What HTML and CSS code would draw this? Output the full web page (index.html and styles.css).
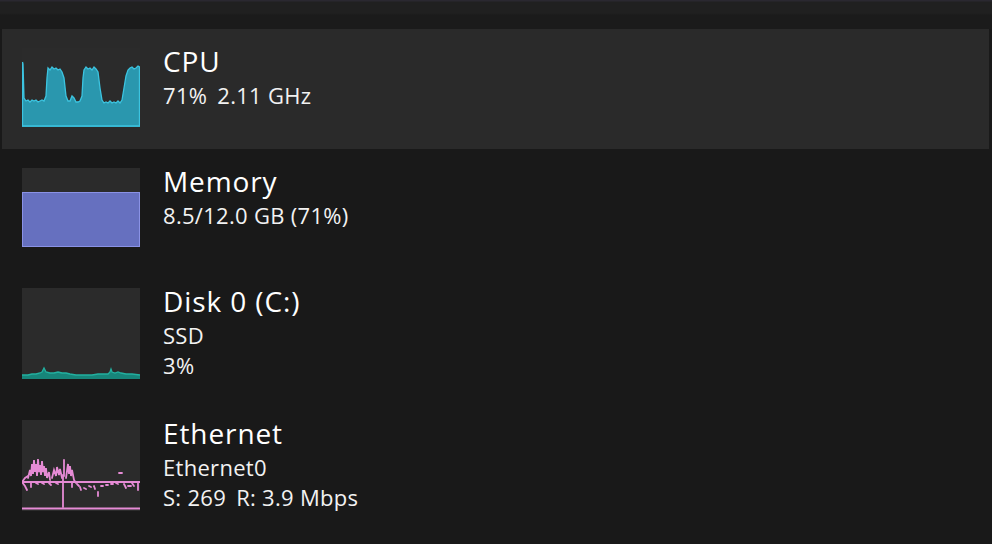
FILE: index.html
```html
<!DOCTYPE html>
<html>
<head>
<meta charset="utf-8">
<link rel="stylesheet" href="styles.css">
</head>
<body>
<div class="topbar"></div>
<div class="list">
  <div class="row selected">
    <div class="graph">
      <svg width="118" height="79" viewBox="0 0 118 79">
        <polygon class="cpu-fill" points="0,14 1,16 2,50 4,53 6,52 8,54 10,52 12,53 14,52 16,54 18,53 20,52 22,53 24,48 25,30 26,20 28,22 30,19 32,21 34,20 36,22 38,21 40,24 42,30 44,48 46,53 48,53 50,48 52,50 54,54 56,54 58,53 60,48 61,30 62,22 64,19 66,21 68,20 70,22 72,19 74,21 76,24 78,40 80,52 82,55 84,54 86,55 88,53 90,55 92,54 94,55 96,53 98,55 100,52 102,40 104,28 106,22 108,20 110,19 112,21 114,20 116,18 118,19 118,79 0,79"/>
        <polyline class="cpu-line" points="0.5,14 1,16 2,50 4,53 6,52 8,54 10,52 12,53 14,52 16,54 18,53 20,52 22,53 24,48 25,30 26,20 28,22 30,19 32,21 34,20 36,22 38,21 40,24 42,30 44,48 46,53 48,53 50,48 52,50 54,54 56,54 58,53 60,48 61,30 62,22 64,19 66,21 68,20 70,22 72,19 74,21 76,24 78,40 80,52 82,55 84,54 86,55 88,53 90,55 92,54 94,55 96,53 98,55 100,52 102,40 104,28 106,22 108,20 110,19 112,21 114,20 116,18 117.5,19 117.5,78 0.5,78 0.5,14"/>
      </svg>
    </div>
    <div class="info">
      <div class="title">CPU</div>
      <div class="sub first">71% <span class="gap">2.11 GHz</span></div>
    </div>
  </div>

  <div class="row">
    <div class="graph">
      <svg width="118" height="79" viewBox="0 0 118 79">
        <rect class="mem-fill" x="0.5" y="24.5" width="117" height="54"/>
      </svg>
    </div>
    <div class="info">
      <div class="title">Memory</div>
      <div class="sub first">8.5/12.0 GB (71%)</div>
    </div>
  </div>

  <div class="row tall">
    <div class="graph">
      <svg width="118" height="91" viewBox="0 0 118 91">
        <polygon class="disk-fill" points="0,87 6,87 10,86 14,86 18,85 20,84 22,80 24,84 28,85 32,85 36,84 40,85 44,85 48,86 54,87 62,87 70,87 76,86 82,86 86,86 88,84 89,81 90,84 93,85 96,84 99,85 104,86 110,86 118,87 118,91 0,91"/>
        <polyline class="disk-line" points="0,87 6,87 10,86 14,86 18,85 20,84 22,80 24,84 28,85 32,85 36,84 40,85 44,85 48,86 54,87 62,87 70,87 76,86 82,86 86,86 88,84 89,81 90,84 93,85 96,84 99,85 104,86 110,86 118,87"/>
      </svg>
    </div>
    <div class="info">
      <div class="title">Disk 0 (C:)</div>
      <div class="sub first">SSD</div>
      <div class="sub">3%</div>
    </div>
  </div>

  <div class="row tall">
    <div class="graph">
      <svg width="118" height="91" viewBox="0 0 118 91">
        <g class="eth">
          <line x1="0" y1="62" x2="118" y2="62"/>
          <line x1="0" y1="88.5" x2="118" y2="88.5"/>
          <line x1="41" y1="55" x2="41" y2="87"/>
          <polyline points="6,58 8,50 9,56 10,44 11,54 12,40 13,52 14,44 15,56 16,39 17,52 18,45 19,55 20,41 21,52 22,46 23,56 24,48 25,58 27,52 28,60"/>
          <polyline points="30,58 32,50 34,56 35,47 37,55 38,49 40,58"/>
          <line x1="42" y1="40" x2="42" y2="56"/>
          <polyline points="44,58 46,44 47,54 48,46 49,56 50,50 52,60 54,63"/>
          <polyline points="0,62 3,58 6,56"/>
          <polyline points="0,62 3,66 5,70"/>
          <line x1="9" y1="63" x2="9" y2="67"/>
          <line x1="14" y1="63" x2="16" y2="64"/>
          <line x1="20" y1="63" x2="22" y2="64"/>
          <line x1="27" y1="63" x2="29" y2="65"/>
          <line x1="34" y1="63" x2="36" y2="64"/>
          <line x1="50" y1="63" x2="50" y2="67"/>
          <line x1="55" y1="64" x2="57" y2="66"/>
          <line x1="58" y1="67" x2="59" y2="70"/>
          <line x1="62" y1="68" x2="64" y2="69"/>
          <line x1="67" y1="66" x2="69" y2="67"/>
          <line x1="72" y1="66" x2="73" y2="69"/>
          <line x1="76" y1="72" x2="76" y2="76"/>
          <line x1="79" y1="66" x2="81" y2="66"/>
          <line x1="84" y1="65" x2="86" y2="65"/>
          <line x1="89" y1="64" x2="91" y2="64"/>
          <line x1="94" y1="63" x2="96" y2="64"/>
          <line x1="97" y1="53" x2="100" y2="53"/>
          <line x1="102" y1="64" x2="104" y2="68"/>
          <line x1="106" y1="66" x2="109" y2="66"/>
          <line x1="110" y1="63" x2="112" y2="66"/>
          <line x1="116" y1="62" x2="116" y2="70"/>
        </g>
      </svg>
    </div>
    <div class="info">
      <div class="title">Ethernet</div>
      <div class="sub first">Ethernet0</div>
      <div class="sub">S: 269 <span class="gap">R: 3.9 Mbps</span></div>
    </div>
  </div>
</div>
</body>
</html>
```

FILE: styles.css
```css
html, body {
  margin: 0;
  padding: 0;
}
body {
  width: 992px;
  height: 544px;
  overflow: hidden;
  background: #191919;
  font-family: "Open Sans", "Noto Sans", sans-serif;
  color: #ffffff;
}
.topbar {
  height: 29px;
  background: linear-gradient(#2a2830 0, #2a2830 1px, #202020 2px, #202020 13px, #1b1b1b 15px, #1b1b1b 29px);
}
.list {
  display: flex;
  flex-direction: column;
}
.row {
  display: flex;
  align-items: flex-start;
  gap: 23px;
  height: 120px;
  box-sizing: border-box;
  padding: 19px 0 0 20px;
  margin: 0 3px 0 2px;
}
.row.tall {
  height: 132px;
}
.row.selected {
  background: #2a2a2a;
}
.graph {
  width: 118px;
  height: 79px;
  background: #2b2b2b;
  flex: none;
}
.row.tall .graph {
  height: 91px;
}
.graph svg {
  display: block;
}
.cpu-fill {
  fill: #2a97ae;
}
.cpu-line {
  fill: none;
  stroke: #3cc4e0;
  stroke-width: 1.3;
}
.mem-fill {
  fill: #6670bf;
  stroke: #8a92e6;
  stroke-width: 1;
}
.disk-fill {
  fill: #17857a;
}
.disk-line {
  fill: none;
  stroke: #22b0a0;
  stroke-width: 1.3;
}
.eth line, .eth polyline {
  stroke: #e68bd5;
  stroke-width: 1.8;
  stroke-linecap: round;
  fill: none;
}
.info {
  display: flex;
  flex-direction: column;
  margin-top: -4px;
}
.title {
  font-size: 28px;
  line-height: 35px;
  letter-spacing: 0.9px;
}
.sub {
  font-size: 22px;
  line-height: 30px;
  color: #f2f2f2;
  letter-spacing: 0.3px;
}
.sub.first {
  margin-top: 1px;
}
.gap {
  margin-left: 4px;
}
```
